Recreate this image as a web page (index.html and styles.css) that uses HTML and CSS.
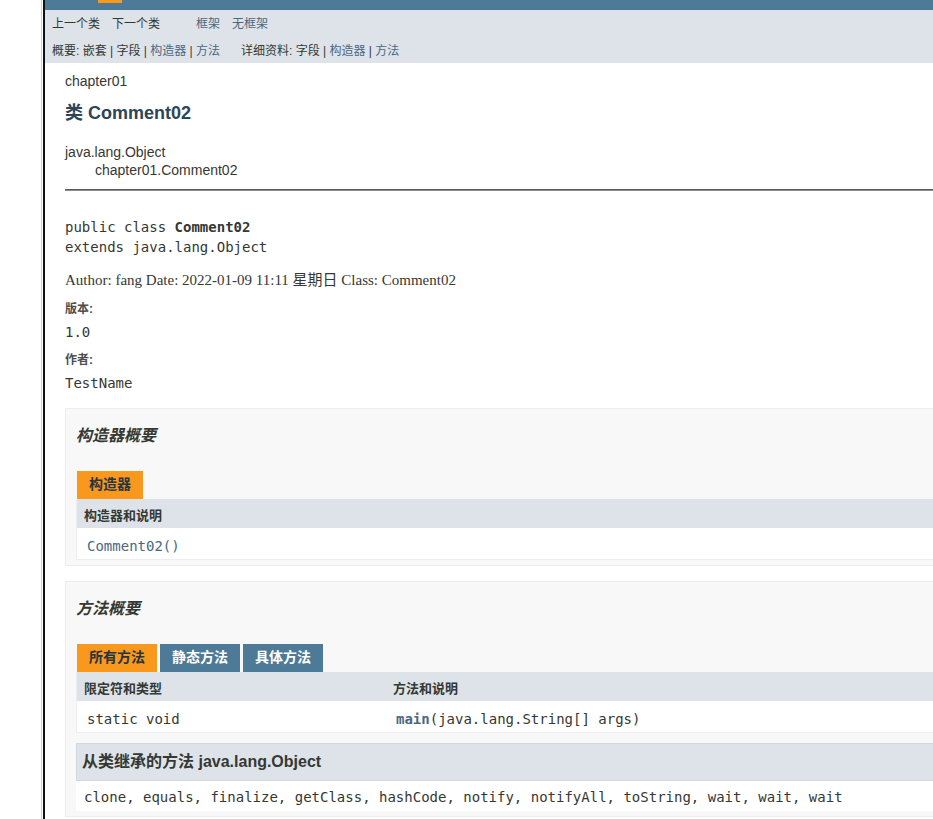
FILE: index.html
```html
<!DOCTYPE html>
<html lang="zh-CN">
<head>
<meta charset="utf-8">
<title>Comment02</title>
<link rel="stylesheet" href="styles.css">
</head>
<body>
<div class="frame">
  <div class="side"></div>
  <div class="main">
    <div class="topnav"><span class="topnav-active"></span></div>
    <div class="subnav">
      <div class="subnav-row">
        <ul class="navlist">
          <li>上一个类</li>
          <li>下一个类</li>
        </ul>
        <ul class="navlist navlist-frames">
          <li><a href="#">框架</a></li>
          <li><a href="#">无框架</a></li>
        </ul>
      </div>
      <div class="subnav-row">
        <div class="subnav-group subnav-group-first">概要:&nbsp;嵌套&nbsp;|&nbsp;字段&nbsp;|&nbsp;<a href="#">构造器</a>&nbsp;|&nbsp;<a href="#">方法</a></div>
        <div class="subnav-group">详细资料:&nbsp;字段&nbsp;|&nbsp;<a href="#">构造器</a>&nbsp;|&nbsp;<a href="#">方法</a></div>
      </div>
    </div>
    <div class="content">
      <div class="subtitle">chapter01</div>
      <h2 class="title">类 Comment02</h2>
      <div class="inheritance">
        <div>java.lang.Object</div>
        <div class="inheritance-child">chapter01.Comment02</div>
      </div>
      <hr class="rule">
      <pre class="signature">public class <b>Comment02</b>
extends java.lang.Object</pre>
      <div class="block">Author: fang Date: 2022-01-09 11:11 星期日 Class: Comment02</div>
      <dl class="tags">
        <dt>版本:</dt>
        <dd>1.0</dd>
        <dt>作者:</dt>
        <dd>TestName</dd>
      </dl>

      <section class="summary">
        <h3>构造器概要</h3>
        <div class="tabs"><span class="tab tab-active">构造器</span></div>
        <table class="member-table">
          <tr><th>构造器和说明</th></tr>
          <tr><td class="code"><a class="ctor-link" href="#">Comment02</a><span class="ctor-link">()</span></td></tr>
        </table>
      </section>

      <section class="summary">
        <h3>方法概要</h3>
        <div class="tabs">
          <span class="tab tab-active">所有方法</span>
          <span class="tab">静态方法</span>
          <span class="tab">具体方法</span>
        </div>
        <table class="member-table">
          <tr><th class="col-first">限定符和类型</th><th>方法和说明</th></tr>
          <tr><td class="code col-first">static void</td><td class="code"><a class="member-link" href="#">main</a>(java.lang.String[] args)</td></tr>
        </table>
        <div class="inherited">
          <h3 class="inherited-title">从类继承的方法&nbsp;java.lang.Object</h3>
          <div class="inherited-list code">clone, equals, finalize, getClass, hashCode, notify, notifyAll, toString, wait, wait, wait</div>
        </div>
      </section>
    </div>
  </div>
</div>
</body>
</html>
```

FILE: styles.css
```css
html, body {
  margin: 0;
  padding: 0;
  background: #ffffff;
  overflow: hidden;
}

body {
  font-family: "Liberation Sans", "Noto Sans CJK SC", sans-serif;
  font-size: 14px;
  color: #353833;
}

a {
  color: #4a6782;
  text-decoration: none;
}

.frame {
  display: flex;
  min-height: 100vh;
}

.side {
  flex: 0 0 41px;
  background: #ffffff;
  border-right: 1px solid #cfcfcf;
  margin-right: 1px;
}

.main {
  flex: 0 0 1000px;
  width: 1000px;
  border-left: 2px solid #111111;
  background: #ffffff;
}

.topnav {
  height: 10px;
  background: #4d7a97;
  display: flex;
  align-items: flex-start;
}

.topnav-active {
  display: block;
  width: 24px;
  height: 3px;
  margin-left: 53px;
  background: #f8981d;
}

.subnav {
  background: #dee3e9;
  height: 53px;
  font-size: 12px;
}

.subnav-row {
  display: flex;
  align-items: center;
  padding-left: 7px;
}

.subnav-row:first-child {
  height: 25px;
}

.subnav-row:last-child {
  height: 28px;
}

.navlist {
  list-style: none;
  margin: 0;
  padding: 0;
  display: flex;
  gap: 12px;
}

.navlist-frames {
  margin-left: 36px;
}

.subnav-group {
  white-space: nowrap;
}

.subnav-group-first {
  width: 189px;
}

.content {
  padding: 0 0 0 20px;
}

.subtitle {
  margin-top: 8px;
  line-height: 20px;
}

.title {
  margin: 10px 0 0;
  font-size: 18px;
  line-height: 24px;
  font-weight: bold;
  color: #2c4557;
}

.inheritance {
  margin-top: 18px;
  line-height: 18px;
}

.inheritance-child {
  padding-left: 30px;
}

.rule {
  margin: 10px 0 0;
  height: 0;
  border: 0;
  border-top: 1px solid #5a5a5a;
  border-bottom: 1px solid #8a8a8a;
}

.signature {
  margin: 26px 0 0;
  font-family: "DejaVu Sans Mono", monospace;
  font-size: 14px;
  line-height: 20px;
  color: #353833;
}

.block {
  margin-top: 13px;
  font-family: "Liberation Serif", "Noto Sans CJK SC", serif;
  font-size: 15px;
  line-height: 20px;
  color: #353833;
}

.tags {
  margin: 11px 0 0;
}

.tags dt {
  font-size: 12px;
  font-weight: bold;
  line-height: 16px;
  color: #4e4e4e;
}

.tags dd {
  margin: 5px 0 10px;
  font-family: "DejaVu Sans Mono", monospace;
  font-size: 14px;
  line-height: 20px;
}

.tags dd:last-child {
  margin-bottom: 0;
}

.summary {
  margin-top: 15px;
  border: 1px solid #ededed;
  background: #f8f8f8;
  padding: 0 20px 5px 10px;
}

.summary h3 {
  margin: 0;
  padding-top: 17px;
  font-size: 16px;
  line-height: 20px;
  font-style: italic;
  font-weight: bold;
  color: #353833;
}

.tabs {
  display: flex;
  gap: 3px;
  margin-top: 25px;
  padding-left: 1px;
}

.tab {
  display: block;
  height: 16px;
  padding: 5px 12px 7px;
  font-size: 14px;
  line-height: 16px;
  font-weight: bold;
  background: #4d7a97;
  color: #ffffff;
  white-space: nowrap;
}

.tab-active {
  background: #f8981d;
  color: #253441;
}

.member-table {
  width: 100%;
  border-collapse: collapse;
  border-left: 1px solid #eeeeee;
  border-right: 1px solid #eeeeee;
  border-bottom: 1px solid #eeeeee;
}

.member-table th {
  background: #dee3e9;
  text-align: left;
  font-size: 13px;
  line-height: 18px;
  font-weight: bold;
  padding: 8px 3px 3px 7px;
  color: #353833;
}

.member-table td {
  background: #ffffff;
  padding: 8px 3px 3px 10px;
  line-height: 20px;
  vertical-align: top;
}

.member-table .col-first {
  width: 296px;
}

.code {
  font-family: "DejaVu Sans Mono", monospace;
  font-size: 14px;
}

.ctor-link {
  color: #4a6782;
}

.member-link {
  color: #4a6782;
  font-weight: bold;
}

.inherited {
  margin-top: 10px;
}

.summary .inherited-title {
  margin: 0;
  padding: 7px 5px;
  background: #dee3e9;
  border: 1px solid #d0d9e0;
  font-style: normal;
  font-size: 16px;
  line-height: 22px;
  font-weight: bold;
  color: #353833;
}

.inherited-list {
  background: #ffffff;
  padding: 6px 8px 4px;
  line-height: 20px;
  white-space: nowrap;
}
```
